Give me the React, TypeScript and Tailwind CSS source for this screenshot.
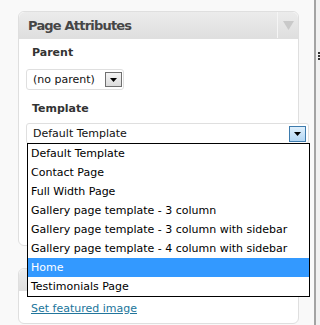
import React from "react";

const font = { fontFamily: '"DejaVu Sans", Verdana, sans-serif' };

function Arrow({ color = "#000" }: { color?: string }) {
  return (
    <svg width="7" height="4" viewBox="0 0 7 4">
      <path d="M0 0h7L3.5 4z" fill={color} />
    </svg>
  );
}

const items = [
  "Default Template",
  "Contact Page",
  "Full Width Page",
  "Gallery page template - 3 column",
  "Gallery page template - 3 column with sidebar",
  "Gallery page template - 4 column with sidebar",
  "Home",
  "Testimonials Page",
];

export default function App() {
  return (
    <div
      className="relative w-[320px] h-[325px] overflow-hidden bg-[#f9f9f9] flex"
      style={font}
    >
      <div className="w-[314px] flex flex-col pl-[18px] pt-[11px]">
        {/* Panel 1 */}
        <div className="w-[281px] h-[235px] rounded-[6px] border border-[#dfdfdf] bg-white flex flex-col">
          <div className="h-[27px] rounded-t-[6px] bg-gradient-to-b from-[#ececec] to-[#dfdfdf] border-b border-[#dfdfdf] flex items-center">
            <div className="flex-1 pl-[9px] text-[13px] font-bold text-[#464646] leading-none tracking-[-0.8px]">
              Page Attributes
            </div>
            <div className="w-[21px] h-full border-l border-[#f5f5f5] flex items-center justify-center">
              <svg width="11" height="9" viewBox="0 0 11 9">
                <path d="M0 0h11L5.5 9z" fill="#c9c9c9" />
              </svg>
            </div>
          </div>
          <div className="flex flex-col pl-[7px]">
            <div className="pl-[6px] pt-[7px] text-[11px] font-bold text-[#333] leading-[14px]">
              Parent
            </div>
            <div className="mt-[9px] w-[98px] h-[21px] rounded-[3px] border border-[#dfdfdf] bg-white flex items-center justify-between pl-[6px] pr-[1px]">
              <span className="text-[11px] text-[#111] leading-none">(no parent)</span>
              <div className="w-[17px] h-[15px] border border-[#6f6f6f] bg-gradient-to-b from-[#f4f4f4] to-[#dcdcdc] flex items-center justify-center">
                <Arrow />
              </div>
            </div>
            <div className="pl-[6px] pt-[12px] text-[11px] font-bold text-[#333] leading-[14px]">
              Template
            </div>
            <div className="mt-[7px] w-[283px] h-[21px] rounded-[3px] border border-[#dfdfdf] bg-white flex items-center justify-between pl-[6px] pr-[2px]">
              <span className="text-[11px] text-[#111] leading-none">Default Template</span>
              <div className="w-[17px] h-[16px] border border-[#3d7bad] bg-gradient-to-b from-[#e0f0fc] to-[#b3d6f3] flex items-center justify-center">
                <Arrow />
              </div>
            </div>
          </div>
        </div>
        {/* Panel 2 */}
        <div className="mt-[22px] w-[281px] h-[56px] rounded-[6px] border border-[#dfdfdf] bg-white flex flex-col">
          <div className="h-[22px] rounded-t-[6px] bg-gradient-to-b from-[#ececec] to-[#dfdfdf] border-b border-[#dfdfdf]" />
          <div className="pl-[12px] pt-[12px] text-[11px] leading-none">
            <a className="text-[#21759b] underline" href="#">
              Set featured image
            </a>
          </div>
        </div>
      </div>
      <div className="w-[2px] h-full bg-[#a3a3a3]" />
      <div className="flex-1 bg-[#f1f1f1] flex flex-col items-end pt-[52px]">
        <div className="w-[2px] h-[2px] bg-[#333] mb-[1px]" />
        <div className="w-[2px] h-[2px] bg-[#333] mb-[1px]" />
        <div className="w-[2px] h-[2px] bg-[#333]" />
      </div>

      {/* Dropdown list */}
      <div className="absolute left-[27px] top-[143px] w-[283px] border border-black bg-white flex flex-col">
        {items.map((it) => (
          <div
            key={it}
            className={
              it === "Home"
                ? "h-[19px] pl-[3px] flex items-center text-[11px] leading-none bg-[#3399ff] text-white"
                : "h-[19px] pl-[3px] flex items-center text-[11px] leading-none text-black"
            }
          >
            {it}
          </div>
        ))}
      </div>
    </div>
  );
}
